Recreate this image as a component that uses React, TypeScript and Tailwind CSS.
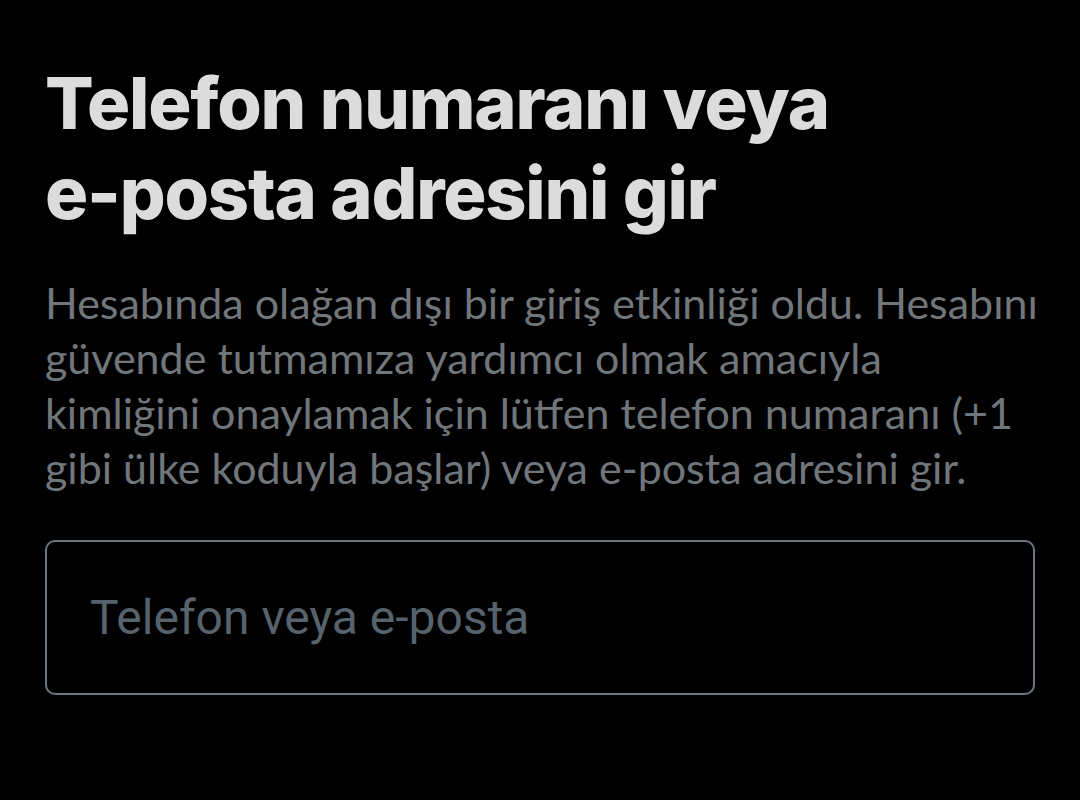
import React from 'react';

const App: React.FC = () => {
  return (
    <div className="w-[1080px] h-[800px] bg-black overflow-hidden">
      <div className="px-[45px] pt-[58px]">
        <h1 className="font-['Inter',sans-serif] font-extrabold text-[72px] leading-[90px] tracking-[-1.2px] text-[#dcdcdc]">
          Telefon numaranı veya
          <br />
          e-posta adresini gir
        </h1>
        <p className="mt-[37px] whitespace-nowrap font-['Lato',sans-serif] text-[43px] leading-[55px] text-[#71767b]">
          Hesabında olağan dışı bir giriş etkinliği oldu. Hesabını
          <br />
          güvende tutmamıza yardımcı olmak amacıyla
          <br />
          kimliğini onaylamak için lütfen telefon numaranı (+1
          <br />
          gibi ülke koduyla başlar) veya e-posta adresini gir.
        </p>
        <div className="mt-[45px] h-[155px] w-[990px] rounded-[10px] border-2 border-[#6e767d] flex items-center px-[43px]">
          <input
            className="w-full bg-transparent outline-none font-['Roboto',sans-serif] text-[48px] text-[#e7e9ea] placeholder:text-[#56626c]"
            placeholder="Telefon veya e-posta"
          />
        </div>
      </div>
    </div>
  );
};

export default App;
